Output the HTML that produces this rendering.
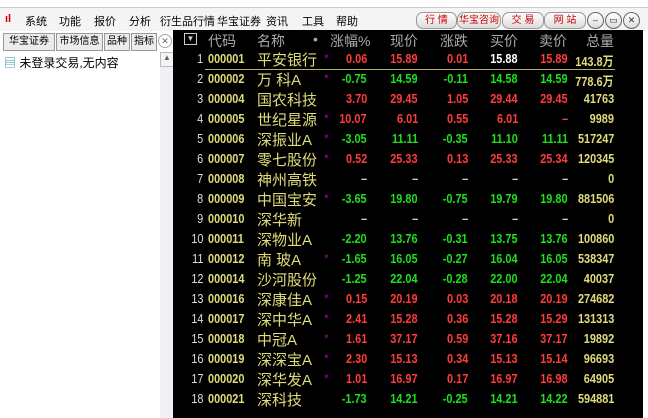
<!DOCTYPE html><html><head><meta charset="utf-8"><style>
body{margin:0;width:648px;height:418px;overflow:hidden;background:#fff;font-family:"Liberation Sans","Noto Sans CJK SC",sans-serif;position:relative}
.a{position:absolute;white-space:nowrap}
#menu{position:absolute;left:0;top:7px;width:648px;height:23px;background:#f4f4f4;border-top:1px solid #ccc}
#menu span{position:absolute;top:5px;font-size:11px;color:#000}
.btn{position:absolute;top:4px;height:15px;border:1px solid #999;border-radius:7px;background:linear-gradient(#fff,#ddd);color:#c00;font-size:10px;text-align:center;line-height:15px;overflow:hidden}
.circ{position:absolute;top:4px;width:15px;height:15px;border:1px solid #666;border-radius:50%;background:linear-gradient(#fff,#ddd);font-size:9px;text-align:center;line-height:15px;color:#333}
#tbl{position:absolute;left:173px;top:30px;width:470px;height:388px;background:#000}
.tab{position:absolute;top:33px;height:16px;border:1px solid #999;background:#ececec;font-size:10px;line-height:16px;text-align:center;overflow:hidden}
.r{position:absolute;font-size:13px;font-weight:bold;white-space:nowrap;transform:scaleX(0.84);transform-origin:right center}
.l{transform-origin:left center}
.h{position:absolute;font-size:14px;color:#aaa;white-space:nowrap}
</style></head><body>
<div id="menu">
<span style="left:5px;color:#c00;font-weight:bold">ıl</span>
<span style="left:25px">系统</span><span style="left:59px">功能</span><span style="left:94px">报价</span><span style="left:129px">分析</span><span style="left:160px">衍生品行情</span><span style="left:217px">华宝证券</span><span style="left:266px">资讯</span><span style="left:302px">工具</span><span style="left:336px">帮助</span>
<div class="btn" style="left:416px;width:39px">行 情</div>
<div class="btn" style="left:457px;width:42px">华宝咨询</div>
<div class="btn" style="left:502px;width:40px">交 易</div>
<div class="btn" style="left:544px;width:40px">网 站</div>
<div class="circ" style="left:587px">–</div><div class="circ" style="left:605px">▭</div><div class="circ" style="left:623px">✕</div>
</div>
<div class="tab" style="left:3px;width:50px">华宝证券</div>
<div class="tab" style="left:56px;width:45px">市场信息</div>
<div class="tab" style="left:104px;width:24px">品种</div>
<div class="tab" style="left:131px;width:24px">指标</div>
<div class="a" style="left:158px;top:34px;width:12px;height:12px;border:1px solid #aaa;border-radius:50%;font-size:9px;text-align:center;line-height:12px;color:#666">✕</div>
<div class="a" style="left:4px;top:54px;font-size:12px"><span style="color:#38a">▤</span> 未登录交易,无内容</div>
<div class="a" style="left:160px;top:52px;width:13px;height:366px;background:#eef0f5"></div>
<div class="a" style="left:160px;top:52px;width:12px;height:13px;border:1px solid #bbb;background:#f4f4f4;font-size:8px;text-align:center;color:#666">▲</div>
<div id="tbl"></div>
<div class="a" style="left:184px;top:33px;width:11px;height:10px;border:1px solid #ccc;color:#ccc;font-size:8px;text-align:center;line-height:10px">▼</div>
<div class="h" style="left:208px;top:31px">代码</div><div class="h" style="left:257px;top:31px">名称</div><div class="h" style="left:313px;top:31px">•</div>
<div class="h" style="left:330px;top:31px">涨幅%</div><div class="h" style="left:390px;top:31px">现价</div><div class="h" style="left:440px;top:31px">涨跌</div><div class="h" style="left:490px;top:31px">买价</div><div class="h" style="left:539px;top:31px">卖价</div><div class="h" style="left:586px;top:31px">总量</div>
<div class="a" style="left:205px;top:69px;width:410px;height:1px;background:#b8b060"></div>
<div id="rows"></div>
<script>
var d=[
["000001","平安银行",1,"0.06","15.89","0.01","15.88","15.89","143.8万","r",1],
["000002","万 科A",1,"-0.75","14.59","-0.11","14.58","14.59","778.6万","g"],
["000004","国农科技",0,"3.70","29.45","1.05","29.44","29.45","41763","r"],
["000005","世纪星源",1,"10.07","6.01","0.55","6.01","–","9989","r"],
["000006","深振业A",1,"-3.05","11.11","-0.35","11.10","11.11","517247","g"],
["000007","零七股份",1,"0.52","25.33","0.13","25.33","25.34","120345","r"],
["000008","神州高铁",0,"–","–","–","–","–","0","w"],
["000009","中国宝安",1,"-3.65","19.80","-0.75","19.79","19.80","881506","g"],
["000010","深华新",0,"–","–","–","–","–","0","w"],
["000011","深物业A",0,"-2.20","13.76","-0.31","13.75","13.76","100860","g"],
["000012","南 玻A",1,"-1.65","16.05","-0.27","16.04","16.05","538347","g"],
["000014","沙河股份",0,"-1.25","22.04","-0.28","22.00","22.04","40037","g"],
["000016","深康佳A",1,"0.15","20.19","0.03","20.18","20.19","274682","r"],
["000017","深中华A",1,"2.41","15.28","0.36","15.28","15.29","131313","r"],
["000018","中冠A",1,"1.61","37.17","0.59","37.16","37.17","19892","r"],
["000019","深深宝A",1,"2.30","15.13","0.34","15.13","15.14","96693","r"],
["000020","深华发A",1,"1.01","16.97","0.17","16.97","16.98","64905","r"],
["000021","深科技",0,"-1.73","14.21","-0.25","14.21","14.22","594881","g"]];
var C={r:"#ff3b3b",g:"#1ee01e",w:"#ccc"},Y="#e0dc7c",h="";
var R=[367,418,468,518,568,614];
d.forEach(function(x,i){var t=51+i*20,c=C[x[9]];
h+='<div class="r" style="right:'+(648-203)+'px;top:'+t+'px;color:#ddd;font-weight:normal">'+(i+1)+'</div>';
h+='<div class="r l" style="left:208px;top:'+t+'px;color:'+Y+'">'+x[0]+'</div>';
h+='<div class="a" style="left:257px;top:'+(t-2)+'px;font-size:15px;color:'+Y+'">'+x[1]+'</div>';
if(x[2])h+='<div class="a" style="left:324px;top:'+(t+1)+'px;font-size:8px;color:#d0d">×</div>';
for(var k=0;k<6;k++){var col=k==5?Y:c;if(k==3&&x[10])col="#fff";if(x[9]=="w")col=k==5?Y:"#ccc";
h+='<div class="r" style="right:'+(648-R[k])+'px;top:'+t+'px;color:'+col+'">'+x[3+k]+'</div>';}
});
document.getElementById('rows').innerHTML=h;
</script>
</body></html>
